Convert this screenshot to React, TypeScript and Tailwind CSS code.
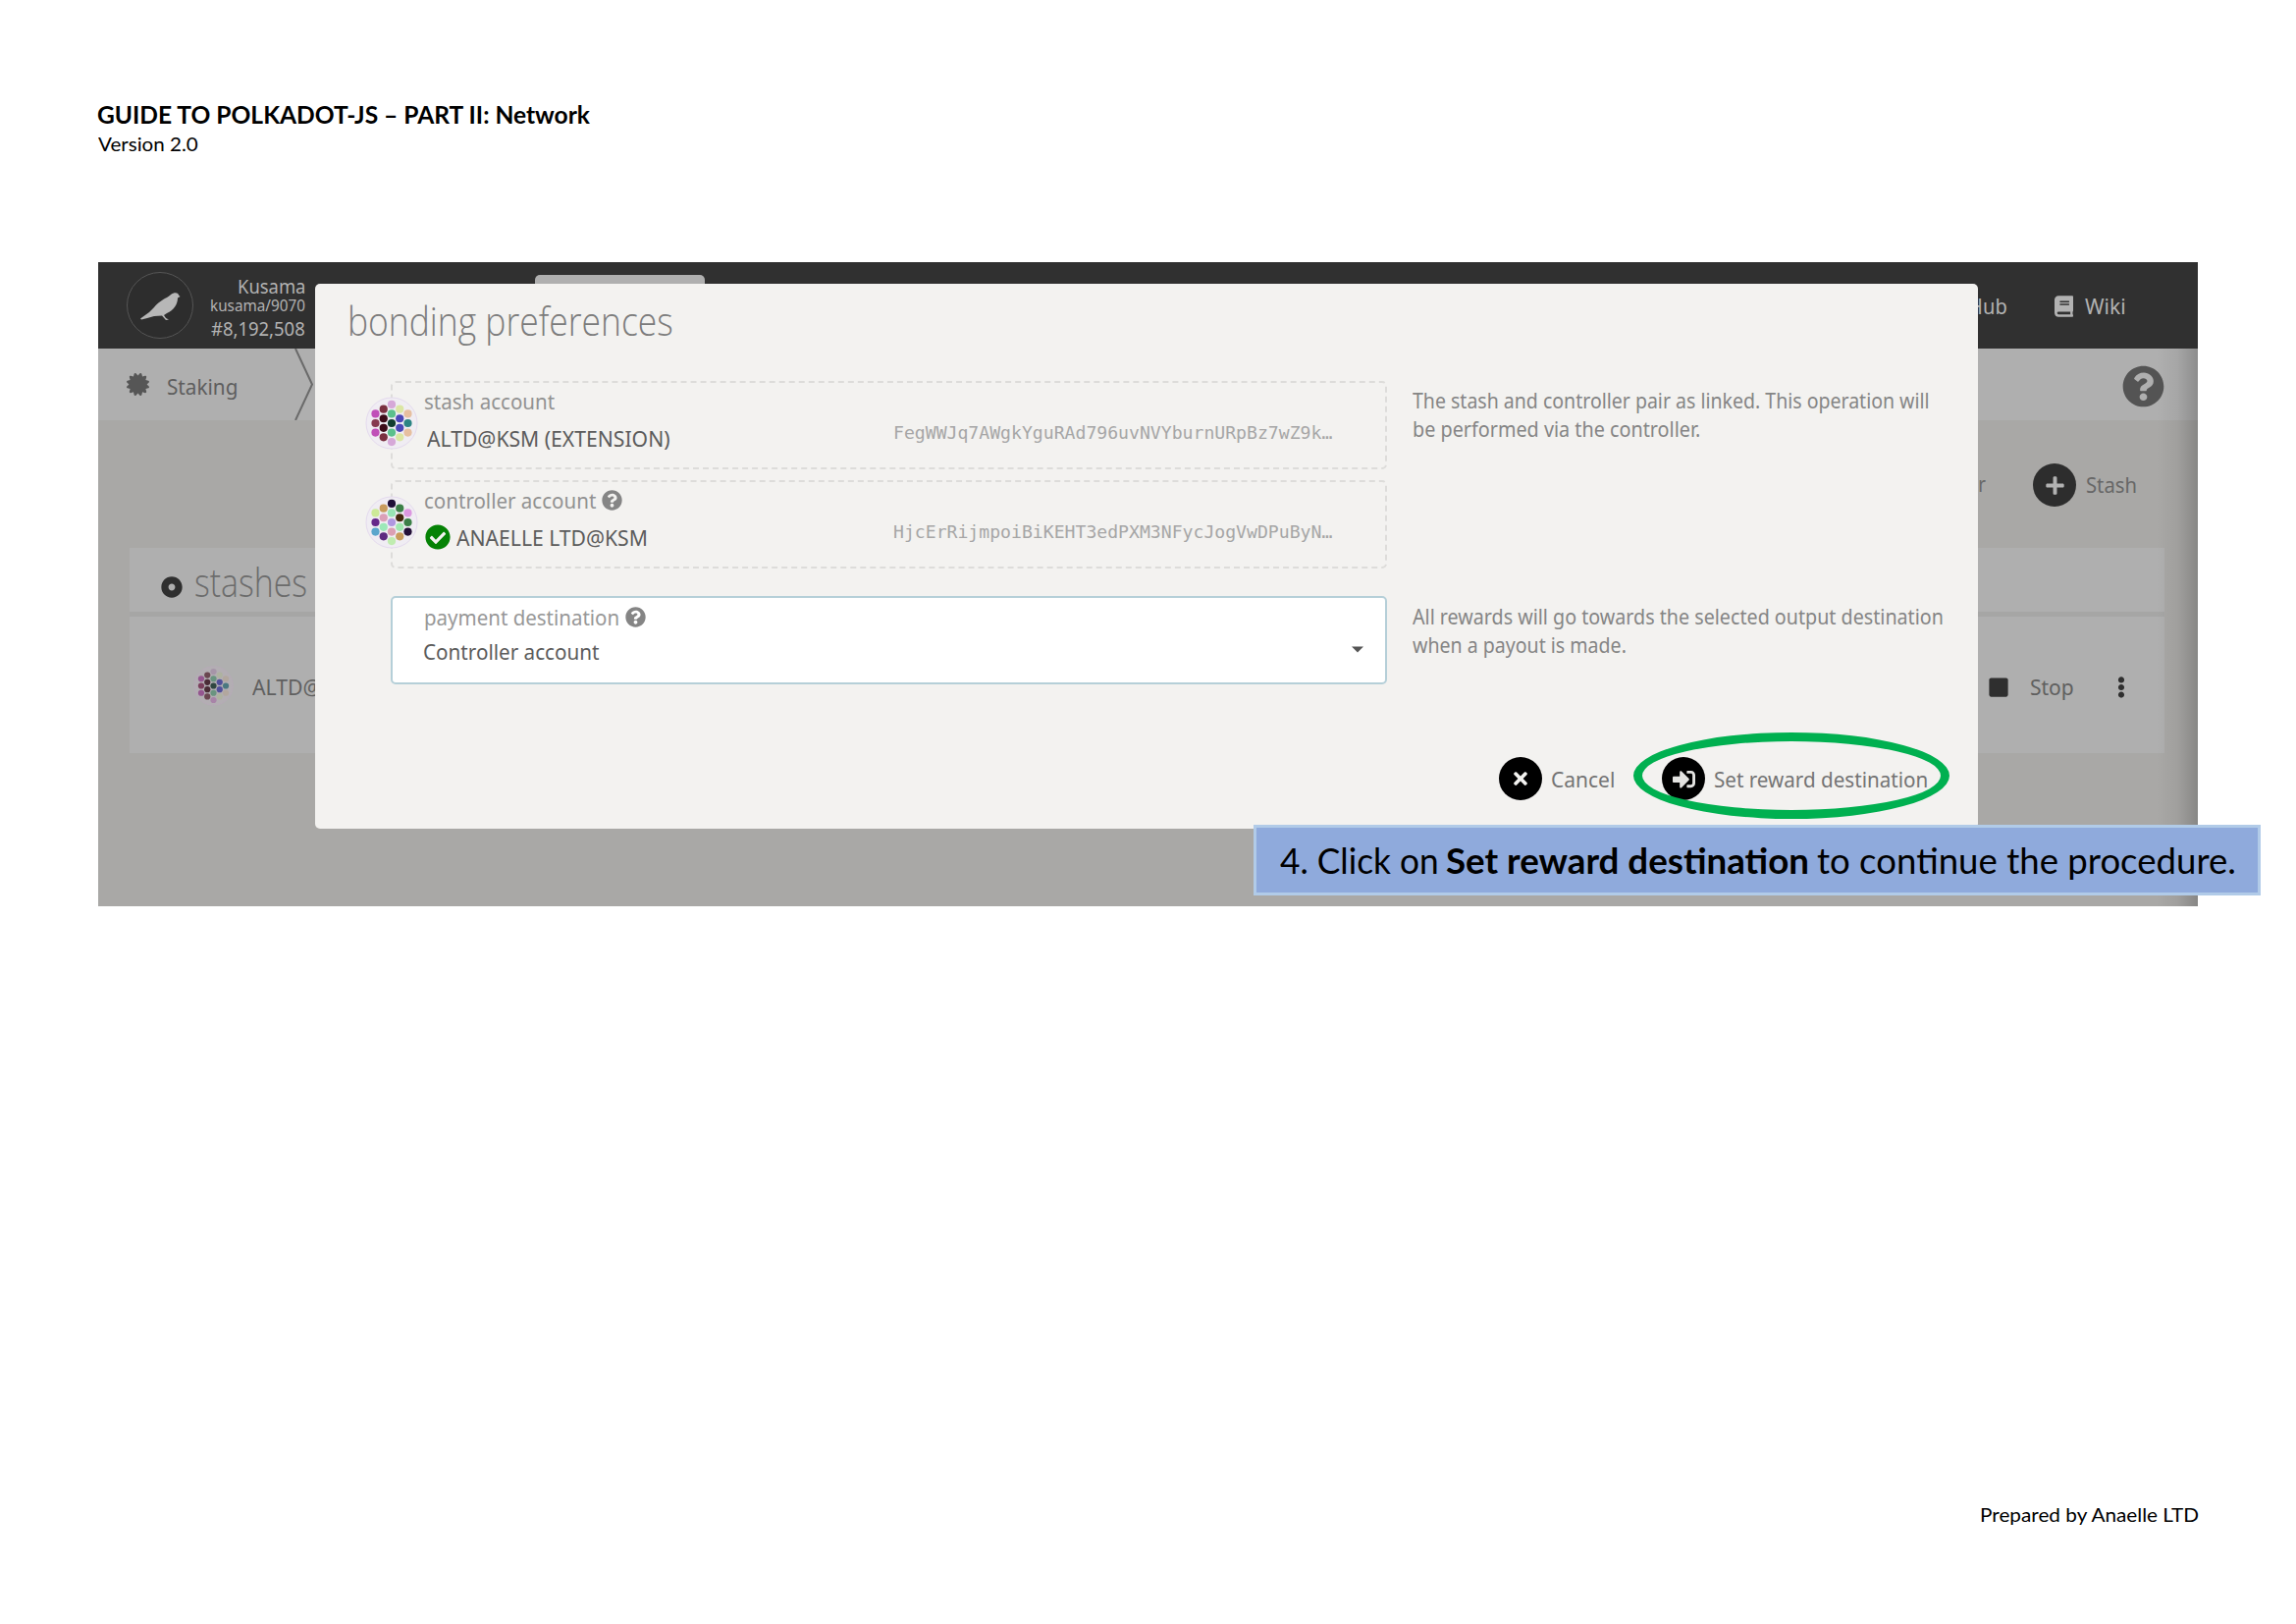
import { useLayoutEffect, useRef, useState } from "react";
import type { ReactNode } from "react";
import {
  FaBook,
  FaCertificate,
  FaCheckCircle,
  FaDotCircle,
  FaEllipsisV,
  FaPlus,
  FaQuestionCircle,
  FaSignInAlt,
  FaStop,
  FaTimes,
} from "react-icons/fa";

/** A single line of text, condensed or stretched so that it fills its own box. */
function Line({ className, children }: { className: string; children: ReactNode }) {
  const box = useRef<HTMLDivElement>(null);
  const text = useRef<HTMLSpanElement>(null);
  const [scale, setScale] = useState(1);
  useLayoutEffect(() => {
    if (!box.current || !text.current || text.current.offsetWidth === 0) return;
    setScale(box.current.offsetWidth / text.current.offsetWidth);
  }, []);
  return (
    <div ref={box} className={`shrink-0 whitespace-nowrap ${className}`}>
      <span ref={text} className="block w-max origin-left" style={{ transform: `scaleX(${scale})` }}>
        {children}
      </span>
    </div>
  );
}

const STASH_DOTS = [
  ["#c04fb8", "#863a50", "#c04fb8"],
  ["#7a3040", "#3c0c18", "#3c0c18", "#7a3040"],
  ["#d6a8d8", "#5cc08c", "#123c30", "#5cc08c", "#d6a8d8"],
  ["#dbe6a4", "#4c48b8", "#4c48b8", "#dbe6a4"],
  ["#e6bfa0", "#2c8484", "#e6bfa0"],
];

const DIMMED_DOTS = [
  ["#94568f", "#7a3f5c", "#94568f"],
  ["#6a4650", "#4a2c36", "#4a2c36", "#6a4650"],
  ["#a695a8", "#6a9480", "#2f4640", "#6a9480", "#a884a8"],
  ["#aeb2a0", "#51509a", "#51509a", "#aeb2a0"],
  ["#b2a79e", "#4a7880", "#b2a79e"],
];

const CONTROLLER_DOTS = [
  ["#cdea98", "#66288a", "#5aa6cc"],
  ["#c89c5c", "#dba0b8", "#9ce8b8", "#5e2a80"],
  ["#201038", "#98e4b4", "#b098e0", "#dba0b4", "#c0ecb0"],
  ["#3c8048", "#44280e", "#a0e8b0", "#c89c5c"],
  ["#dc98e0", "#3c8048", "#241038"],
];

function Identicon({ dots, disc, className }: { dots: string[][]; disc: string; className: string }) {
  return (
    <svg viewBox="-27 -27 54 54" className={className}>
      <circle r="26" className={disc} strokeWidth="1" />
      {dots.map((column, c) =>
        column.map((fill, r) => (
          <circle
            key={`${c}-${r}`}
            cx={(c - 2) * 8.25}
            cy={(r - (column.length - 1) / 2) * 9.55}
            r="4.1"
            fill={fill}
          />
        )),
      )}
    </svg>
  );
}

function AccountBox({
  label,
  help,
  dots,
  address,
  children,
}: {
  label: ReactNode;
  help?: boolean;
  dots: string[][];
  address: string;
  children: ReactNode;
}) {
  return (
    <div className="relative h-[90px] rounded-[5px] border-2 border-dashed border-[#dddcda] pt-[7px] pr-[54px] pl-[32px]">
      <Identicon
        dots={dots}
        disc="fill-[#f0edf3] stroke-[#e4daee]"
        className="absolute top-[14px] left-[-28px] h-[54px] w-[54px]"
      />
      <div className="flex items-center gap-[6px] text-[21px] leading-6 text-[#929292]">
        {label}
        {help && <FaQuestionCircle className="mb-[2px] size-[21px] text-[#858585]" />}
      </div>
      <div className="mt-[8px] flex items-start justify-between">
        <div className="flex items-center pt-[4px] text-[22px] leading-[26px] text-[#5c5c5c]">{children}</div>
        <Line className="w-[447px] font-['DejaVu_Sans_Mono',monospace] text-[18px] leading-[23px] text-[#a6a6a6]">
          {address}
        </Line>
      </div>
    </div>
  );
}

function Backdrop() {
  return (
    <div className="flex h-full flex-col overflow-hidden">
      <div className="flex h-[88px] shrink-0 items-start bg-[#303030] text-[#b2b2b2]">
        <svg viewBox="0 0 70 70" className="mt-[9px] ml-[28px] h-[70px] w-[70px]">
          <circle cx="35" cy="35" r="33.5" fill="#2d2d2d" stroke="#555555" strokeWidth="1" />
          <path
            d="M15 48.5 L24 42 L29 37 C32 33 38 29 42 27 C45 25.500 46 23 49 22.500 C52 21.500 54 23.500 54 24.500 L55.500 26 L53 27.500 C53 34 49 40 42 43 L39 45 L41 48 L44 49.500 L41 50 L37 45.500 L29 46 L22 48 L16 49.500 Z"
            fill="#b7b7b7"
          />
        </svg>
        <div className="flex w-[113px] flex-col items-end pt-[15px]">
          <Line className="w-[69px] text-[20px] leading-[19px]">Kusama</Line>
          <Line className="w-[97px] text-[17px] leading-[19px]">kusama/9070</Line>
          <Line className="mt-1 w-[96px] text-[20px] leading-[21px]">#8,192,508</Line>
        </div>
        <div className="mt-[13px] ml-[234px] h-6 w-[173px] rounded-t-[5px] bg-[#afafaf]" />
        <div className="mt-[31px] ml-auto flex items-center pr-[73px] text-[21px] leading-7">
          <Line className="w-[67px]">GitHub</Line>
          <FaBook className="ml-[48px] h-[22px] w-[19px]" />
          <Line className="ml-3 w-[42px]">Wiki</Line>
        </div>
      </div>

      <div className="relative flex min-h-0 flex-1 flex-col bg-[#a9a8a6]">
        <div className="flex h-[73px] shrink-0 items-center bg-[#afafaf] pl-[29px] text-[#5e5e5e]">
          <FaCertificate className="mb-[1px] size-[23px] text-[#565656]" />
          <Line className="mt-[4px] ml-[18px] w-[72px] text-[21px] leading-7">Staking</Line>
          <svg viewBox="0 0 20 73" className="ml-[58px] h-[73px] w-5" fill="none" stroke="#6a6a6a" strokeWidth="2">
            <path d="M1 0 L18 36.500 L1 73" />
          </svg>
          <FaQuestionCircle className="mt-[4px] mr-[34px] ml-auto size-[43px] text-[#545454]" />
        </div>

        <div className="flex h-[130px] shrink-0 items-center justify-end pt-[2px] pr-[62px] text-[21px] text-[#676767]">
          <Line className="w-[88px]">Controller</Line>
          <div className="ml-[48px] flex size-11 items-center justify-center rounded-full bg-[#2d2d2d] text-[#b2b2b2]">
            <FaPlus className="size-[21px]" />
          </div>
          <Line className="ml-[10px] w-[52px] leading-7">Stash</Line>
        </div>

        <div className="mr-[34px] ml-[32px] flex h-[65px] shrink-0 items-center bg-[#afafaf] pl-[32px]">
          <FaDotCircle className="mt-[14px] size-[22px] text-[#2f2f2f]" />
          <Line className="mt-[4px] ml-[12px] w-[115px] font-['Open_Sans',sans-serif] text-[40px] leading-[50px] font-light text-[#6c6c6c]">
            stashes
          </Line>
        </div>
        <div className="mr-[34px] ml-[32px] h-[5px] shrink-0 bg-[#a6a6a5]" />
        <div className="mr-[34px] ml-[32px] flex h-[139px] shrink-0 items-center bg-[#afafaf] text-[#606060]">
          <Identicon
            dots={DIMMED_DOTS}
            disc="fill-[#b3aeb3] stroke-[#b6a9b8]"
            className="mt-[2px] ml-[65px] size-[41px]"
          />
          <Line className="mt-[2px] ml-[19px] w-[249px] text-[22px] leading-7">ALTD@KSM (EXTENSION)</Line>
          <div className="mt-[4px] mr-[34px] ml-auto flex items-center">
            <FaStop className="size-[22px] text-[#2f2f2f]" />
            <Line className="mt-[1px] ml-[21px] w-[45px] text-[21px] leading-7">Stop</Line>
            <FaEllipsisV className="ml-[38px] h-[22px] w-[20px] text-[#2f2f2f]" />
          </div>
        </div>
        <div className="absolute top-0 right-0 h-full w-[42px] bg-linear-to-r from-transparent via-black/5 to-black/20" />
      </div>
    </div>
  );
}

function BondingModal() {
  return (
    <div className="absolute top-[22px] left-[221px] flex h-[555px] w-[1694px] flex-col rounded-[5px] bg-[#f3f2f0] pt-[13px]">
      <Line className="ml-[33px] w-[332px] font-['Open_Sans',sans-serif] text-[40px] leading-[50px] font-light text-[#7c7c7c]">
        bonding preferences
      </Line>

      <div className="mt-[36px] ml-[77px] flex gap-[26px]">
        <div className="flex w-[1015px] flex-col gap-[11px]">
          <AccountBox
            label={<Line className="w-[133px]">stash account</Line>}
            dots={STASH_DOTS}
            address="FegWWJq7AWgkYguRAd796uvNVYburnURpBz7wZ9k…"
          >
            <Line className="ml-[3px] w-[248px]">ALTD@KSM (EXTENSION)</Line>
          </AccountBox>
          <AccountBox
            label={<Line className="w-[175px]">controller account</Line>}
            help
            dots={CONTROLLER_DOTS}
            address="HjcErRijmpoiBiKEHT3edPXM3NFycJogVwDPuByN…"
          >
            <FaCheckCircle className="ml-[1px] size-[26px] text-[#058205]" />
            <Line className="ml-[6px] w-[195px]">ANAELLE LTD@KSM</Line>
          </AccountBox>
        </div>
        <div className="pt-[6px] text-[21px] leading-[28.5px] text-[#858585]">
          <Line className="w-[527px]">The stash and controller pair as linked. This operation will</Line>
          <Line className="w-[293px]">be performed via the controller.</Line>
        </div>
      </div>

      <div className="mt-[28px] ml-[77px] flex gap-[26px]">
        <div className="flex h-[90px] w-[1015px] items-start rounded-[5px] border-2 border-[#b5cfd8] bg-white pt-[8px] pl-[32px]">
          <div className="text-[21px] leading-6">
            <div className="flex items-center gap-[6px] text-[#989898]">
              <Line className="w-[199px]">payment destination</Line>
              <FaQuestionCircle className="mb-[2px] size-[21px] text-[#858585]" />
            </div>
            <Line className="mt-[11px] w-[180px] -translate-x-px text-[#5c5c5c]">Controller account</Line>
          </div>
          <svg viewBox="0 0 12 7" className="mt-[41px] mr-[22px] ml-auto h-[7px] w-3 fill-[#555555]">
            <path d="M0 0.500 H12 L6 6.500 Z" />
          </svg>
        </div>
        <div className="pt-[7px] text-[21px] leading-[28.5px] text-[#858585]">
          <Line className="w-[541px]">All rewards will go towards the selected output destination</Line>
          <Line className="w-[218px]">when a payout is made.</Line>
        </div>
      </div>

      <div className="mt-[74px] flex items-center justify-end pr-[51px] text-[21px] leading-7 text-[#747474]">
        <div className="flex size-11 items-center justify-center rounded-full bg-black text-[#f3f2f0]">
          <FaTimes className="size-[20px]" />
        </div>
        <Line className="mt-px ml-[9px] w-[65px]">Cancel</Line>
        <div className="ml-[48px] flex size-11 items-center justify-center rounded-full bg-black text-[#e4e3e1]">
          <FaSignInAlt className="size-[23px]" />
        </div>
        <Line className="mt-px ml-[9px] w-[218px]">Set reward destination</Line>
      </div>
    </div>
  );
}

export default function App() {
  return (
    <div className="relative flex h-[1654px] w-[2339px] flex-col overflow-hidden bg-white pt-[101px] font-['Lato',sans-serif] text-black">
      <header className="ml-[99px]">
        <Line className="w-[502px] text-[25px] leading-[30px] font-bold">GUIDE TO POLKADOT-JS – PART II: Network</Line>
        <Line className="ml-px w-[102px] text-[20px] leading-[30px]">Version 2.0</Line>
      </header>

      <section className="relative mt-[106px] ml-[100px] h-[656px] w-[2139px] shrink-0 font-['Noto_Sans',sans-serif]">
        <Backdrop />
        <BondingModal />
        <div className="absolute top-[479px] left-[1564px] h-[88px] w-[322px] rounded-[50%] border-[9px] border-[#00b050]" />
        <div className="absolute top-[573px] left-[1177px] flex h-[72px] w-[1026px] items-center border-[3px] border-[#b1cbe8] bg-[#8faadc] pl-[24px] font-['Lato',sans-serif] text-[37px] leading-[48px]">
          <Line className="w-[162px]">4. Click on</Line>
          <Line className="ml-[7px] w-[370px] font-bold">Set reward destination</Line>
          <Line className="ml-[8px] w-[427px]">to continue the procedure.</Line>
        </div>
      </section>

      <footer className="mt-[604px] mr-[99px] flex justify-end">
        <Line className="w-[223px] text-[20px] leading-[30px]">Prepared by Anaelle LTD</Line>
      </footer>
    </div>
  );
}
